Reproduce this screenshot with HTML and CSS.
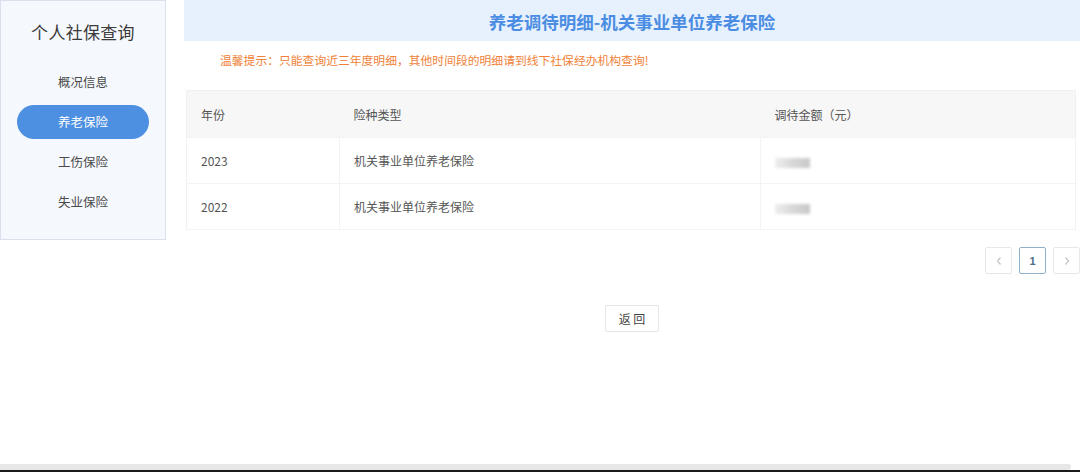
FILE: index.html
```html
<!DOCTYPE html>
<html lang="zh-CN">
<head>
<meta charset="utf-8">
<title>个人社保查询</title>
<link rel="stylesheet" href="styles.css">
</head>
<body>
<div class="page">
  <div class="content">
    <aside class="sidebar">
      <div class="side-title">个人社保查询</div>
      <ul class="menu">
        <li class="menu-item">概况信息</li>
        <li class="menu-item active">养老保险</li>
        <li class="menu-item">工伤保险</li>
        <li class="menu-item">失业保险</li>
      </ul>
    </aside>
    <main class="main">
      <div class="main-header">养老调待明细-机关事业单位养老保险</div>
      <div class="tip">温馨提示：只能查询近三年度明细，其他时间段的明细请到线下社保经办机构查询!</div>
      <table class="grid">
        <thead>
          <tr><th class="c1">年份</th><th class="c2">险种类型</th><th class="c3">调待金额（元）</th></tr>
        </thead>
        <tbody>
          <tr><td>2023</td><td>机关事业单位养老保险</td><td><span class="blur"></span></td></tr>
          <tr><td>2022</td><td>机关事业单位养老保险</td><td><span class="blur"></span></td></tr>
        </tbody>
      </table>
      <div class="pager">
        <span class="pg"><svg width="8" height="10" viewBox="0 0 8 10"><path d="M5.5 1.5 L2.5 5 L5.5 8.5" fill="none" stroke="#c4c4c4" stroke-width="1.2"/></svg></span>
        <span class="pg current">1</span>
        <span class="pg"><svg width="8" height="10" viewBox="0 0 8 10"><path d="M2.5 1.5 L5.5 5 L2.5 8.5" fill="none" stroke="#c4c4c4" stroke-width="1.2"/></svg></span>
      </div>
      <div class="actions">
        <button class="back">返 回</button>
      </div>
    </main>
  </div>
  <div class="hbar"></div>
  <div class="edge"></div>
</div>
</body>
</html>
```
FILE: styles.css
```css
* { box-sizing: border-box; }
html, body { margin: 0; padding: 0; background: #fff; }
body {
  font-family: "Noto Sans CJK SC", "Noto Sans", sans-serif;
  color: #555;
}
.page {
  width: 1080px;
  height: 472px;
  display: flex;
  flex-direction: column;
  overflow: hidden;
}
.content {
  flex: 1;
  display: flex;
  align-items: flex-start;
}
.sidebar {
  width: 166px;
  height: 240px;
  background: #f5f8fd;
  border: 1px solid #d9e2ec;
  flex-shrink: 0;
}
.side-title {
  text-align: center;
  font-size: 17px;
  color: #3a3a3a;
  margin-top: 18px;
  line-height: 26px;
  letter-spacing: 0.3px;
}
.menu {
  list-style: none;
  margin: 20px 0 0;
  padding: 0;
  display: flex;
  flex-direction: column;
  align-items: center;
  gap: 6px;
}
.menu-item {
  width: 132px;
  height: 34px;
  line-height: 34px;
  text-align: center;
  font-size: 12.5px;
  color: #4a4a4a;
  border-radius: 17px;
}
.menu-item.active {
  background: #4d8fe1;
  color: #fff;
}
.main {
  flex: 1;
  margin-left: 18px;
}
.main-header {
  height: 41px;
  line-height: 43px;
  background: #e6f1fd;
  text-align: center;
  font-size: 17.5px;
  font-weight: bold;
  color: #4b8de2;
}
.tip {
  margin-top: 11px;
  padding-left: 36px;
  font-size: 11.8px;
  line-height: 16px;
  color: #f08238;
}
.grid {
  margin: 22px 4px 0 2px;
  width: calc(100% - 6px);
  border-collapse: collapse;
  font-size: 12px;
  color: #555;
  border: 1px solid #f1f1f1;
}
.grid th {
  background: #f7f7f7;
  font-weight: normal;
  text-align: left;
  height: 47px;
  padding: 0 14px;
  border-bottom: 1px solid #f3f3f3;
}
.grid td {
  height: 46px;
  padding: 0 14px;
  border-right: 1px solid #f3f3f3;
  border-bottom: 1px solid #f3f3f3;
}
.grid .c1 { width: 153px; }
.grid .c2 { width: 421px; }
.blur {
  display: inline-block;
  width: 35px;
  height: 10px;
  vertical-align: middle;
  background: linear-gradient(90deg, #eee 0%, #d8d8d8 50%, #c8c8c8 100%);
  filter: blur(1.5px);
}
.pager {
  display: flex;
  justify-content: flex-end;
  gap: 7px;
  margin-top: 17px;
}
.pg {
  width: 27px;
  height: 27px;
  border: 1px solid #e8e8e8;
  border-radius: 2px;
  display: flex;
  align-items: center;
  justify-content: center;
}
.pg.current {
  border: 1.5px solid #8fb1c9;
  color: #4a6d8a;
  font-size: 11px;
  font-weight: bold;
  font-family: "Liberation Sans", sans-serif;
}
.actions {
  display: flex;
  justify-content: center;
  margin-top: 31px;
}
.back {
  width: 54px;
  height: 27px;
  background: #fff;
  border: 1px solid #e6e6e6;
  border-radius: 2px;
  font-family: "Noto Sans CJK SC", sans-serif;
  font-size: 12px;
  color: #444;
  padding: 0;
}
.hbar {
  height: 6px;
  width: 1071px;
  background: #e7e7e7;
  border-radius: 0 3px 3px 0;
  flex-shrink: 0;
}
.edge {
  height: 2px;
  background: #1a1a1a;
  flex-shrink: 0;
}
```
